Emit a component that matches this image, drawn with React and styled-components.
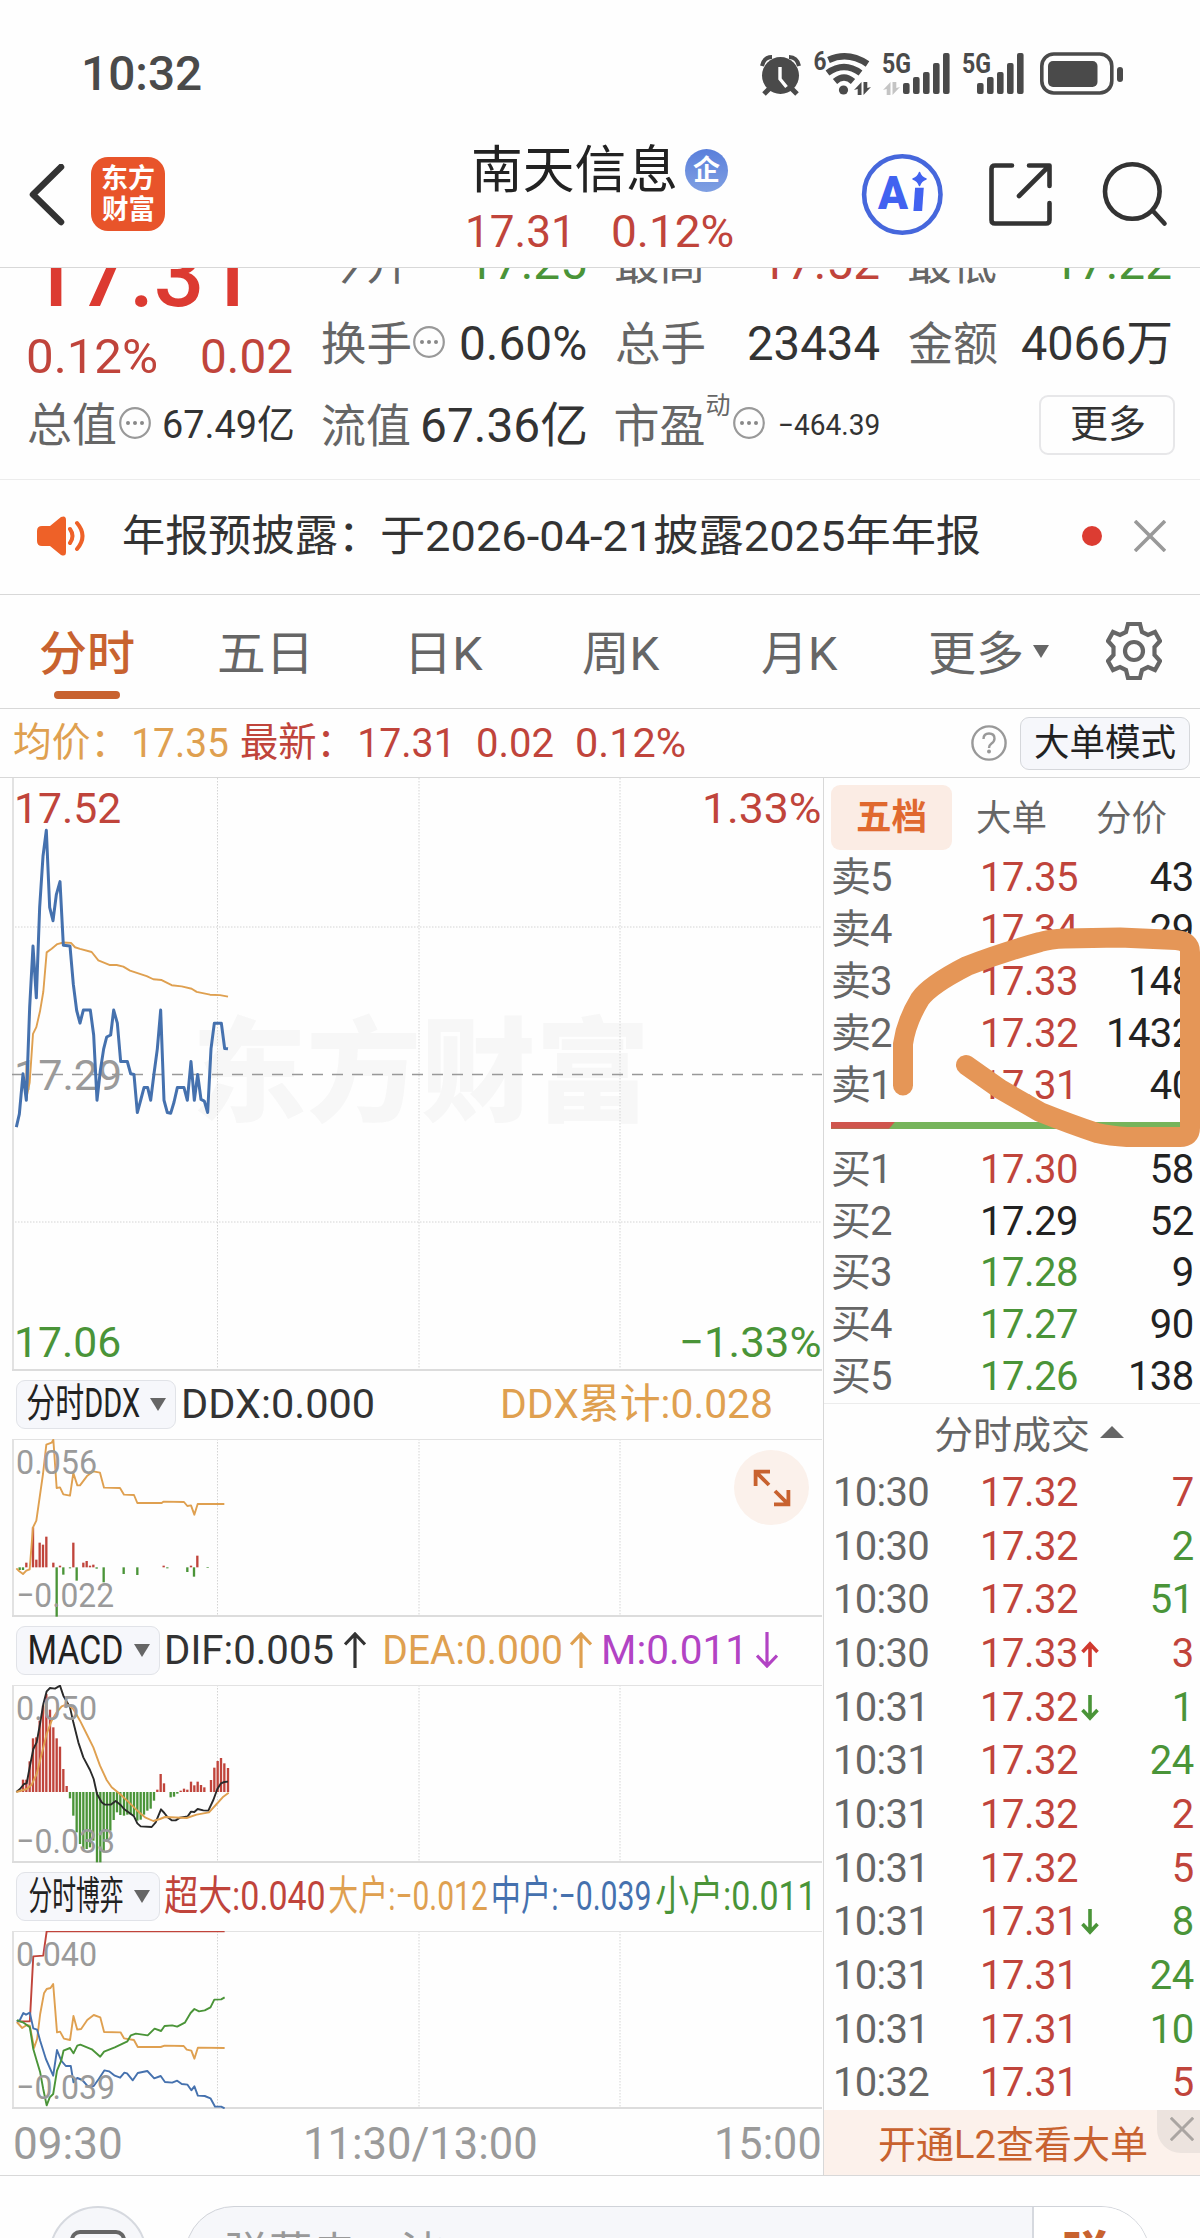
import React, { useLayoutEffect, useRef, useState } from "react";
import styled, { createGlobalStyle } from "styled-components";

const RED = "#c0443b";
const GREEN = "#4a9438";
const AMBER = "#dfa050";
const ORANGE = "#c8622f";
const BLUE = "#4571ae";
const GREY = "#666";
const DARK = "#333";
const MUTED = "#9a9a9a";
const LINE = "#d8d8d8";
const FONT = `Roboto, "Noto Sans CJK SC", sans-serif`;

const GlobalStyle = createGlobalStyle`
  * { box-sizing: border-box; }
  body { margin: 0; background: #fefefe; }
`;

/* ---------- text that is fitted to a given width ---------- */

const FitBox = styled.span`
  display: block;
  flex: none;
  width: ${(p) => p.$w}px;
  height: ${(p) => p.$size}px;
  margin-left: ${(p) => p.$ml || 0}px;
  margin-top: ${(p) => p.$mt || 0}px;
  font-size: ${(p) => p.$size}px;
  line-height: ${(p) => p.$size}px;
  font-weight: ${(p) => p.$weight || 400};
  color: ${(p) => p.$color || DARK};
`;

const FitText = styled.span`
  display: inline-block;
  white-space: pre;
  transform-origin: 0 50%;
`;

function Fit({ w, size, weight, color, ml, mt, children }) {
  const ref = useRef(null);
  const [transform, setTransform] = useState("none");
  useLayoutEffect(() => {
    const ctx = document.createElement("canvas").getContext("2d");
    const cs = getComputedStyle(ref.current);
    ctx.font = `${cs.fontWeight} ${cs.fontSize} ${cs.fontFamily}`;
    const m = ctx.measureText(ref.current.textContent);
    const s = w / (m.actualBoundingBoxLeft + m.actualBoundingBoxRight);
    setTransform(`translateX(${m.actualBoundingBoxLeft * s}px) scaleX(${s})`);
  }, [w, size, weight, children]);
  return (
    <FitBox $w={w} $size={size} $weight={weight} $color={color} $ml={ml} $mt={mt}>
      <FitText ref={ref} style={{ transform }}>{children}</FitText>
    </FitBox>
  );
}

/* ---------- page frame ---------- */

const Page = styled.div`
  position: relative;
  width: 1200px;
  height: 2238px;
  overflow: hidden;
  font-family: ${FONT};
  background: #fefefe;
`;

const StatusBar = styled.header`
  display: flex;
  justify-content: space-between;
  align-items: center;
  height: 148px;
  padding: 0 76px 0 84px;

  svg { overflow: visible; }
`;

const NavBar = styled.nav`
  display: flex;
  height: 120px;
  border-bottom: 1px solid ${LINE};
`;

const NavLeft = styled.div`
  display: flex;
  align-items: flex-start;
  width: 468px;
  padding: 9px 0 0 27px;
`;

const BackIcon = styled.svg`
  margin: 7px 24px 0 0;
`;

const AppLogo = styled.div`
  display: flex;
  flex-direction: column;
  align-items: center;
  gap: 4px;
  width: 74px;
  height: 74px;
  padding-top: 9px;
  border-radius: 17px;
  background: #e8542a;
`;

const TitleBlock = styled.div`
  width: 390px;
  margin-top: -3px;
`;

const TitleRow = styled.div`
  display: flex;
  align-items: center;
  height: 50px;
  padding-left: 6px;
`;

const Badge = styled.div`
  display: flex;
  align-items: center;
  justify-content: center;
  width: 43px;
  height: 43px;
  margin-left: 9px;
  padding-top: 2px;
  border-radius: 50%;
  background: linear-gradient(#5a7fdb, #7f9fe2);
`;

const SubtitleRow = styled.div`
  display: flex;
  align-items: center;
  height: 74px;
`;

const NavIcons = styled.svg`
  margin-top: 2px;
`;

/* ---------- quote summary ---------- */

const Quote = styled.section`
  display: flex;
  height: 212px;
  overflow: hidden;
  border-bottom: 1px solid #ececec;
`;

const PriceColumn = styled.div`
  width: 322px;
  margin-top: -37px;
`;

const PriceRow = styled.div`
  display: flex;
  align-items: center;
  height: ${(p) => p.$h}px;
  padding-left: ${(p) => p.$pl}px;
`;

const StatGrid = styled.div`
  display: grid;
  grid-template-columns: 263.5px 263.5px 262px;
  grid-auto-rows: 81.5px;
  column-gap: 30px;
  margin-top: -46px;
`;

const Stat = styled.div`
  display: flex;
  align-items: center;
  justify-content: space-between;
`;

const StatName = styled.div`
  display: flex;
  align-items: center;
`;

const DotsIcon = styled.svg`
  flex: none;
  margin: -5px 0 0 3px;
`;

const MoreCell = styled.div`
  display: flex;
  justify-content: flex-end;
  align-items: center;
  margin-right: -4px;
  margin-top: -2px;
`;

const MoreButton = styled.div`
  display: flex;
  align-items: center;
  justify-content: center;
  width: 136px;
  height: 60px;
  padding-bottom: 1px;
  border: 2px solid #e7e7e9;
  border-radius: 9px;
`;

/* ---------- notice and tabs ---------- */

const Notice = styled.section`
  display: flex;
  align-items: center;
  height: 115px;
  padding: 0 33px 2px 37px;
  border-bottom: 1px solid ${LINE};
`;

const RedDot = styled.i`
  width: 20px;
  height: 20px;
  margin-left: 102px;
  margin-right: 32px;
  border-radius: 50%;
  background: #dc3c32;
`;

const Tabs = styled.section`
  display: flex;
  height: 114px;
  padding-left: 40px;
  border-bottom: 1px solid ${LINE};
`;

const Tab = styled.div`
  display: flex;
  flex-direction: column;
  align-items: center;
  padding-top: 35px;
  margin-right: ${(p) => p.$gap}px;
`;

const TabUnderline = styled.i`
  width: 66px;
  height: 8px;
  margin-top: 14px;
  border-radius: 4px;
  background: ${ORANGE};
`;

const Caret = styled.i`
  flex: none;
  width: 0;
  height: 0;
  border: 8px solid transparent;
  border-top: 13px solid ${GREY};
  border-bottom: 0;
  margin-left: ${(p) => p.$ml || 0}px;
  margin-top: ${(p) => p.$mt || 0}px;
`;

const GearIcon = styled.svg`
  margin: 27px 0 0 57px;
`;

const InfoBar = styled.section`
  display: flex;
  align-items: center;
  height: 69px;
  padding: 0 10px 0 14px;
  border-bottom: 1px solid ${LINE};
`;

const HelpIcon = styled.svg`
  margin-left: auto;
`;

const ModeButton = styled.div`
  display: flex;
  align-items: center;
  justify-content: center;
  width: 170px;
  height: 53px;
  margin-left: 13px;
  padding-top: 1px;
  border: 1px solid #d5d7db;
  border-radius: 9px;
  background: #f6f7fb;
`;

/* ---------- main area ---------- */

const Main = styled.main`
  display: flex;
  height: 1398px;
  border-bottom: 1px solid ${LINE};
`;

const Charts = styled.div`
  width: 824px;
  padding-left: 12px;
  border-right: 1px solid ${LINE};
`;

const Plot = styled.div`
  position: relative;
  width: 810px;
  height: ${(p) => p.$h}px;
`;

const PlotLabels = styled.div`
  position: absolute;
  inset: 0;
  display: flex;
  flex-direction: column;
  justify-content: space-between;
  padding: ${(p) => p.$pad};
`;

const LabelPair = styled.div`
  display: flex;
  justify-content: space-between;
`;

const Watermark = styled.div`
  position: absolute;
  left: 185px;
  top: 239px;
`;

const PanelHead = styled.div`
  display: flex;
  align-items: center;
  height: 68px;
  padding: 0 0 2px 4px;
`;

const Chip = styled.div`
  display: flex;
  align-items: center;
  width: ${(p) => p.$w}px;
  height: 49px;
  margin-right: ${(p) => p.$gap}px;
  padding-left: ${(p) => p.$pl}px;
  border: 1px solid #e1e3e8;
  border-radius: 9px;
  background: #f6f7fb;
`;

const TrendIcon = styled.svg`
  flex: none;
  margin-left: ${(p) => p.$ml}px;
`;

const ExpandButton = styled.div`
  position: absolute;
  left: 722px;
  top: 11px;
  display: flex;
  align-items: center;
  justify-content: center;
  width: 75px;
  height: 75px;
  border-radius: 50%;
  background: #fbf1eb;
`;

const Axis = styled.div`
  display: flex;
  align-items: center;
  height: 70px;
  padding-left: 3px;
`;

/* ---------- order book ---------- */

const Book = styled.aside`
  display: flex;
  flex-direction: column;
  width: 376px;
`;

const BookTabs = styled.div`
  display: flex;
  align-items: center;
  height: 74.5px;
  padding: 5px 0 0 7px;
`;

const ActiveTab = styled.div`
  display: flex;
  align-items: center;
  justify-content: center;
  width: 121px;
  height: 65px;
  padding-top: 1px;
  border-radius: 9px;
  background: #fbece4;
`;

const Row = styled.div`
  display: flex;
  align-items: center;
  height: ${(p) => p.$h}px;
  padding: 0 7px 0 ${(p) => p.$pl}px;
  font-size: 40px;
  line-height: 40px;
`;

const Price = styled.span`
  width: ${(p) => p.$w}px;
  letter-spacing: -0.5px;
  color: ${(p) => p.$color};
`;

const Time = styled.span`
  width: 147px;
  letter-spacing: -0.7px;
  color: ${GREY};
`;

const Side = styled.span`
  width: 149px;
  letter-spacing: -1px;
  color: ${GREY};
`;

const Quantity = styled.span`
  flex: 1;
  margin-right: -0.6px;
  letter-spacing: -0.6px;
  text-align: right;
  color: ${(p) => p.$color};
`;

const RatioBar = styled.div`
  height: 7px;
  margin: 10px 7px 15px;
  background: #76b45b;
`;

const SellShare = styled.div`
  width: 64px;
  height: 7px;
  background: #cf554d;
  clip-path: polygon(0 0, 100% 0, 58px 100%, 0 100%);
`;

const TradesTitle = styled.div`
  display: flex;
  align-items: center;
  height: 62px;
  padding-left: 111px;
  border-top: 1px solid #ececec;
`;

const UpCaret = styled.i`
  width: 0;
  height: 0;
  margin: -6px 0 0 11px;
  border: 12px solid transparent;
  border-top: 0;
  border-bottom: 12px solid ${GREY};
`;

const TradeList = styled.div`
  padding-top: 1px;
`;

const Banner = styled.div`
  display: flex;
  justify-content: space-between;
  height: 65px;
  margin-top: auto;
  padding-left: 55px;
  background: #fcf1eb;
`;

const BannerClose = styled.div`
  display: flex;
  align-items: center;
  justify-content: center;
  width: 43px;
  height: 43px;
  padding: 0 0 6px 6px;
  border-bottom-left-radius: 24px;
  background: #ece3de;
`;

/* ---------- comment bar ---------- */

const BottomBar = styled.footer`
  display: flex;
  padding: 30px 0 0 49px;
`;

const RoundButton = styled.div`
  display: flex;
  justify-content: center;
  width: 98px;
  height: 98px;
  padding-top: 22px;
  border: 2px solid #d6d9df;
  border-radius: 50%;
  background: #f6f7fa;
`;

const CommentBox = styled.div`
  display: flex;
  width: 965px;
  height: 98px;
  margin-left: 38px;
  overflow: hidden;
  border: 1px solid #d0d3d9;
  border-radius: 49px;
  background: #f6f7fa;
`;

const CommentInput = styled.div`
  display: flex;
  align-items: center;
  width: 846px;
  padding: 0 0 2px 41px;
`;

const DanmuToggle = styled.div`
  display: flex;
  flex: 1;
  align-items: center;
  padding: 0 0 3px 30px;
  border-left: 2px solid #d6d9df;
  background: #fff;
`;

const Scribble = styled.svg`
  position: absolute;
  left: 880px;
  top: 910px;
`;

/* ---------- icons ---------- */

const UpDown = ({ x, color }) => (
  <g fill={color}>
    <path d={`M${x} 37 l7.5 -8 v13 h-3.800 v-6z`} />
    <path d={`M${x + 17} 34 l-7.500 8 v-13 h3.800 v6z`} />
  </g>
);

const Bars = ({ x }) =>
  [[0, 30], [10, 24], [20, 19], [30, 10], [40, 0]].map(([dx, y]) => (
    <rect key={dx} x={x + dx} y={y} width="6.6" height={41 - y} rx="2" />
  ));

const StatusIcons = () => (
  <svg width="364" height="46" viewBox="0 -2 364 46" fill="#4a4a4a">
    <circle cx="20.500" cy="22.500" r="18.500" />
    <path d="M20 14 v12 l6.5 8" fill="none" stroke="#fff" strokeWidth="3.4" />
    <path d="M2 13 Q4 4 12 4 M39 13 Q37 4 29 4" fill="none" stroke="#4a4a4a" strokeWidth="4" />
    <path d="M10 35 l-6 6 M31 35 l6 6" stroke="#4a4a4a" strokeWidth="5" />
    <text x="53.5" y="16.5" fontSize="25" fontWeight="700" textLength="13" lengthAdjust="spacingAndGlyphs">6</text>
    <g fill="none" stroke="#4a4a4a" strokeWidth="6.400">
      <path d="M68.500 7 Q88 -2 107.500 11" />
      <path d="M67.500 20 Q84 8 100.500 20" />
      <path d="M75 28.500 Q84 20.500 93 28.500" />
    </g>
    <circle cx="83.500" cy="37" r="4.600" />
    <UpDown x={94} color="#4a4a4a" />
    <text x="122" y="20" fontSize="28" fontWeight="700" textLength="29" lengthAdjust="spacingAndGlyphs">5G</text>
    <UpDown x={123} color="#c4c4c4" />
    <Bars x={143} />
    <text x="202" y="20" fontSize="28" fontWeight="700" textLength="29" lengthAdjust="spacingAndGlyphs">5G</text>
    <Bars x={217} />
    <rect x="281.800" y="1" width="70" height="39" rx="12" fill="none" stroke="#4a4a4a" strokeWidth="3.600" />
    <rect x="288" y="8" width="49.500" height="26" rx="5" />
    <rect x="357" y="14" width="6" height="15" rx="3" />
  </svg>
);

const Dots = () => (
  <DotsIcon width="32" height="32" viewBox="0 0 32 32">
    <circle cx="16" cy="16" r="14.800" fill="none" stroke="#999" strokeWidth="2.200" />
    {[9, 16, 23].map((x) => <circle key={x} cx={x} cy="16" r="2" fill="#888" />)}
  </DotsIcon>
);

const Cross = ({ size, color, width }) => (
  <svg width={size} height={size} viewBox="0 0 32 32">
    <path d="M1 1 L31 31 M31 1 L1 31" stroke={color} strokeWidth={width} />
  </svg>
);

const Trend = ({ down, color, ml }) => (
  <TrendIcon $ml={ml} width="22" height="36" viewBox="-1 0 22 36">
    <path
      d="M10 36 V2 M0 12.500 L10 2 L20 12.500"
      transform={down ? "rotate(180 10 18)" : undefined}
      fill="none" stroke={color} strokeWidth="3.200"
    />
  </TrendIcon>
);

const Tick = ({ down, color }) => (
  <svg width="18" height="26" viewBox="0 0 18 26">
    <path
      d="M9 26 V3 M1.500 11 L9 3 L16.500 11"
      transform={down ? "rotate(180 9 13)" : undefined}
      fill="none" stroke={color} strokeWidth="3.600"
    />
  </svg>
);

/* ---------- charts ---------- */

const Grid = ({ h, rows = [], top }) => (
  <g stroke="#d4d4d4" strokeWidth="1">
    {[205.5, 407, 608].map((x) => (
      <line key={x} x1={x} x2={x} y1="0" y2={h} strokeDasharray="1.500 1.500" />
    ))}
    {rows.map((y) => <line key={y} x1="0" x2="810" y1={y} y2={y} strokeDasharray="1.500 1.500" />)}
    {top && <line x1="0" x2="810" y1="0.500" y2="0.500" stroke="#e2e2e2" />}
    <line x1="1" x2="1" y1="0" y2={h} stroke="#e2e2e2" strokeWidth="2" />
    <line x1="0" x2="810" y1={h - 1} y2={h - 1} stroke="#dcdcdc" strokeWidth="2" />
  </g>
);

const Curve = ({ points, color, width = 1.9 }) => (
  <polyline
    points={points} fill="none" stroke={color} strokeWidth={width}
    strokeLinejoin="round" vectorEffect="non-scaling-stroke"
  />
);

const Histogram = ({ base, data }) =>
  data.map(([x, y]) => (
    <rect
      key={x} x={x - 3.5} width="7" y={Math.min(base, y)} height={Math.abs(y - base)}
      fill={y < base ? RED : GREEN}
    />
  ));

const PRICE = "49,903 58,870 69,768 79,835 89,600 99,445 109,576 119,347 129,218 139,152 149,347 159,381 169,315 180,282 190,443 210,445 220,542 230,608 240,640 250,607 271,607 281,670 291,835 301,760 311,705 320,675 332,670 341,607 352,640 362,737 382,737 392,768 402,770 412,866 422,835 432,803 443,803 452,835 462,768 472,705 482,607 492,835 502,866 512,868 522,840 532,803 552,803 562,835 573,737 583,835 593,770 603,833 613,837 623,866 633,705 643,640 664,640 674,704 684,705";
const AVERAGE = "79,830 89,790 99,667 109,650 120,610 130,560 140,461 155,452 172,440 190,436 213,437 225,448 240,452 275,460 295,481 330,493 350,493 370,497 390,507 440,521 460,529 485,531 515,544 545,547 575,553 590,561 630,568 660,569 684,573";
const DDX_SUM = "49,623 58,632 69,640 79,630 89,626 99,500 109,480 129,340 139,252 149,248 155,246 160,237 170,382 180,380 190,401 210,405 220,337 232,374 240,374 262,345 280,332 300,336 312,381 360,382 372,402 402,403 412,427 485,427 490,423 552,424 562,436 573,434 583,462 593,430 673,430";
const DDX_BARS = [[59, 628], [69, 628], [79, 606], [99, 500], [109, 597], [119, 546], [129, 552], [139, 528], [160, 606], [170, 768], [180, 615], [190, 642], [210, 623], [220, 546], [230, 660], [250, 606], [260, 601], [270, 615], [280, 612], [290, 624], [311, 665], [371, 640], [412, 643], [491, 615], [502, 623], [562, 634], [573, 615], [582, 648], [592, 585], [623, 622]];
const MACD_BARS = [[59, 1288], [69, 1257], [79, 1257], [89, 1202], [99, 1133], [109, 1130], [119, 1080], [129, 1035], [139, 1000], [150, 1047], [160, 1100], [170, 1133], [180, 1158], [190, 1225], [200, 1276], [210, 1313], [220, 1365], [230, 1415], [240, 1450], [250, 1465], [260, 1465], [270, 1460], [280, 1440], [291, 1505], [301, 1505], [311, 1475], [321, 1440], [331, 1410], [341, 1378], [351, 1355], [361, 1363], [372, 1365], [382, 1362], [392, 1362], [402, 1365], [412, 1380], [422, 1377], [432, 1362], [442, 1350], [452, 1344], [462, 1320], [472, 1287], [482, 1240], [492, 1268], [512, 1310], [522, 1308], [532, 1299], [542, 1290], [552, 1284], [562, 1287], [573, 1263], [583, 1274], [593, 1263], [603, 1273], [613, 1280], [633, 1258], [643, 1221], [653, 1201], [663, 1192], [673, 1208], [684, 1222]];
const DIF = "49,1294 60,1285 72,1270 80,1268 90,1215 100,1165 110,1145 120,1090 130,1030 140,992 150,982 165,984 180,975 190,1005 210,1040 220,1085 235,1145 250,1190 270,1228 281,1255 291,1300 305,1325 315,1332 332,1332 347,1321 362,1333 372,1345 402,1367 412,1388 422,1397 455,1399 467,1385 483,1346 493,1357 503,1370 515,1379 527,1379 540,1371 563,1367 573,1353 583,1354 593,1345 610,1349 625,1350 640,1318 652,1285 663,1268 673,1264 684,1263";
const DEA = "49,1294 80,1285 95,1272 110,1240 125,1180 140,1120 155,1080 170,1055 185,1037 200,1031 220,1045 240,1080 260,1120 280,1160 300,1215 320,1258 335,1280 360,1300 390,1328 412,1350 435,1370 460,1381 480,1375 495,1369 560,1372 590,1362 627,1355 650,1330 670,1308 686,1296";
const GAME = [
  [RED, "44,572 78,572 87,377 113,375 122,302 587,302"],
  [AMBER, "44,574 58,592 70,583 78,585 89,652 97,625 105,550 115,488 122,475 132,472 139,460 149,605 157,603 167,624 183,628 192,556 202,597 212,595 228,568 245,553 262,560 272,604 315,605 324,623 350,628 360,649 420,649 430,645 480,646 488,657 500,660 508,684 517,651 587,652"],
  [BLUE, "44,572 52,568 61,547 68,552 78,546 87,593 97,597 105,630 120,685 139,735 149,658 160,690 172,706 185,706 192,755 202,742 215,748 228,765 245,766 258,745 273,719 285,722 300,735 314,741 325,726 332,728 347,749 360,727 385,721 403,743 420,736 431,754 450,756 463,750 475,760 490,762 500,779 508,767 517,795 535,796 550,803 562,828 578,828 587,833"],
  [GREEN, "44,568 52,572 60,575 78,590 87,655 96,690 105,725 113,775 122,824 130,800 139,790 149,720 160,690 166,660 183,652 192,668 202,645 210,642 240,656 262,678 272,663 300,650 333,632 342,614 355,609 386,614 404,594 421,601 430,586 450,584 463,588 483,576 498,547 508,535 520,542 535,539 550,530 560,507 578,506 587,500"],
];

function SubPlot({ viewBox, high, low, children, extra }) {
  return (
    <Plot $h={178}>
      <svg width="810" height="178">
        <Grid h={178} top />
        <svg width="810" height="178" viewBox={viewBox} preserveAspectRatio="none">{children}</svg>
      </svg>
      <PlotLabels $pad="6px 0 5px 5px">
        <Fit w={79} size={34} color={MUTED}>{high}</Fit>
        <Fit w={95} size={34} color={MUTED} ml={1}>{low}</Fit>
      </PlotLabels>
      {extra}
    </Plot>
  );
}

/* ---------- data ---------- */

const SELLS = [["卖5", "17.35", 43], ["卖4", "17.34", 29], ["卖3", "17.33", 148], ["卖2", "17.32", 1432], ["卖1", "17.31", 40]];
const BUYS = [["买1", "17.30", 58, RED], ["买2", "17.29", 52, "#222"], ["买3", "17.28", 9, GREEN], ["买4", "17.27", 90, GREEN], ["买5", "17.26", 138, GREEN]];
const TRADES = [
  ["10:30", "17.32", 7, RED], ["10:30", "17.32", 2, GREEN], ["10:30", "17.32", 51, GREEN],
  ["10:30", "17.33", 3, RED, "up"], ["10:31", "17.32", 1, GREEN, "down"], ["10:31", "17.32", 24, GREEN],
  ["10:31", "17.32", 2, RED], ["10:31", "17.32", 5, RED], ["10:31", "17.31", 8, GREEN, "down"],
  ["10:31", "17.31", 24, GREEN], ["10:31", "17.31", 10, GREEN], ["10:32", "17.31", 5, RED],
];

const BookRow = ({ side, price, qty, color = RED }) => (
  <Row $h={52.05} $pl={7}>
    <Side>{side}</Side>
    <Price $w={100} $color={color}>{price}</Price>
    <Quantity $color="#222">{qty}</Quantity>
  </Row>
);

export default function App() {
  return (
    <Page>
      <GlobalStyle />
      <StatusBar>
        <Fit w={117} size={48} weight={500} color="#4a4a4a">10:32</Fit>
        <StatusIcons />
      </StatusBar>

      <NavBar>
        <NavLeft>
          <BackIcon width="40" height="62" viewBox="0 0 40 62" fill="none" stroke="#333" strokeWidth="6.500">
            <path d="M34 3 L6 30.500 L34 58" strokeLinecap="round" strokeLinejoin="round" />
          </BackIcon>
          <AppLogo>
            <Fit w={52} size={27} weight={700} color="#fff">东方</Fit>
            <Fit w={52} size={27} weight={700} color="#fff">财富</Fit>
          </AppLogo>
        </NavLeft>
        <TitleBlock>
          <TitleRow>
            <Fit w={202} size={51} color="#222">南天信息</Fit>
            <Badge><Fit w={27} size={28} weight={700} color="#fff">企</Fit></Badge>
          </TitleRow>
          <SubtitleRow>
            <Fit w={99} size={44} color={RED}>17.31</Fit>
            <Fit w={120} size={44} color={RED} ml={46}>0.12%</Fit>
          </SubtitleRow>
        </TitleBlock>
        <NavIcons width="320" height="90" viewBox="858 150 320 90" fill="none" stroke="#333" strokeWidth="4.600" strokeLinecap="round" strokeLinejoin="round">
          <circle cx="902.300" cy="194.500" r="38.200" stroke="#4667dc" />
          <g fill="#4162f0" stroke="none">
            <text x="878" y="209" fontSize="47" fontWeight="900" textLength="30" lengthAdjust="spacingAndGlyphs">A</text>
            <text x="911" y="211" fontSize="44" fontWeight="900" textLength="15" lengthAdjust="spacingAndGlyphs" transform="translate(38 0) skewX(-4) translate(-24 0)">ı</text>
            <path d="M919.500 172.500 Q921 177.500 926 179 Q921 180.500 919.500 185.500 Q918 180.500 913 179 Q918 177.500 919.500 172.500z" stroke="#4162f0" strokeWidth="1.500" />
          </g>
          <path d="M1012 165.500 H995 Q991.500 165.500 991.500 169 V220 Q991.500 223.500 995 223.500 H1046 Q1049.500 223.500 1049.500 220 V203 M1029 165.500 H1049.500 V186 M1049 166 L1019 196" />
          <circle cx="1132.300" cy="191.500" r="27.300" />
          <path d="M1153 211 L1164.500 223.500" />
        </NavIcons>
      </NavBar>

      <Quote>
        <PriceColumn>
          <PriceRow $h={90} $pl={35}><Fit w={203} size={90} weight={500} color="#dc3a31">17.31</Fit></PriceRow>
          <PriceRow $h={71} $pl={28}>
            <Fit w={129} size={48} color={RED}>0.12%</Fit>
            <Fit w={90} size={48} color={RED} ml={45}>0.02</Fit>
          </PriceRow>
          <PriceRow $h={66} $pl={28}>
            <Fit w={88} size={46} color={GREY}>总值</Fit>
            <Dots />
            <Fit w={129} size={39} ml={13}>67.49亿</Fit>
          </PriceRow>
        </PriceColumn>
        <StatGrid>
          <Stat><Fit w={87} size={46} color={GREY}>今开</Fit><Fit w={115} size={48} color={GREEN}>17.25</Fit></Stat>
          <Stat><Fit w={87} size={46} color={GREY}>最高</Fit><Fit w={115} size={48} color={RED}>17.52</Fit></Stat>
          <Stat><Fit w={87} size={46} color={GREY}>最低</Fit><Fit w={115} size={48} color={GREEN}>17.22</Fit></Stat>
          <Stat>
            <StatName><Fit w={88} size={46} color={GREY}>换手</Fit><Dots /></StatName>
            <Fit w={125} size={48}>0.60%</Fit>
          </Stat>
          <Stat><Fit w={88} size={46} color={GREY}>总手</Fit><Fit w={130} size={48}>23434</Fit></Stat>
          <Stat><Fit w={88} size={46} color={GREY}>金额</Fit><Fit w={149} size={48}>4066万</Fit></Stat>
          <Stat><Fit w={88} size={46} color={GREY}>流值</Fit><Fit w={163} size={48}>67.36亿</Fit></Stat>
          <Stat>
            <StatName>
              <Fit w={88} size={46} color={GREY}>市盈</Fit>
              <Fit w={23} size={25} color={GREY} ml={3} mt={-40}>动</Fit>
              <Dots />
            </StatName>
            <Fit w={99} size={29}>−464.39</Fit>
          </Stat>
          <MoreCell><MoreButton><Fit w={73} size={38}>更多</Fit></MoreButton></MoreCell>
        </StatGrid>
      </Quote>

      <Notice>
        <svg width="50" height="42" viewBox="0 0 50 42" fill="#ee6128">
          <path d="M5 11 H13 L24 2 Q29 0 29 5 V37 Q29 42 24 40 L13 31 H5 Q0 31 0 26 V16 Q0 11 5 11z" />
          <path d="M33 14 Q38 21 33 28 M40 8 Q51 21 40 34" fill="none" stroke="#ee6128" strokeWidth="4" strokeLinecap="round" />
        </svg>
        <Fit w={229} size={43} ml={37}>年报预披露：</Fit>
        <Fit w={598} size={43} ml={29}>于2026-04-21披露2025年年报</Fit>
        <RedDot />
        <Cross size={32} color="#999" width={3.6} />
      </Notice>

      <Tabs>
        <Tab $gap={85}><Fit w={94} size={47} color={ORANGE} weight={500}>分时</Fit><TabUnderline /></Tab>
        <Tab $gap={105}><Fit w={88} size={47} color={GREY}>五日</Fit></Tab>
        <Tab $gap={100}><Fit w={71} size={47} color={GREY}>日K</Fit></Tab>
        <Tab $gap={102}><Fit w={77} size={47} color={GREY}>周K</Fit></Tab>
        <Tab $gap={92}><Fit w={76} size={47} color={GREY}>月K</Fit></Tab>
        <Tab $gap={0}><Fit w={92} size={47} color={GREY}>更多</Fit></Tab>
        <Caret $ml={11} $mt={50} />
        <GearIcon width="56" height="58" viewBox="-28 -29 56 58" fill="none" stroke={GREY} strokeWidth="4.200">
          <path d="M-6 -27 H6 L8 -19 L14 -16 L21 -19 L26 -10 L20.500 -4 V4 L26 10 L21 19 L14 16 L8 19 L6 27 H-6 L-8 19 L-14 16 L-21 19 L-26 10 L-20.500 4 V-4 L-26 -10 L-21 -19 L-14 -16 L-8 -19z" />
          <circle r="9" />
        </GearIcon>
      </Tabs>

      <InfoBar>
        <Fit w={90} size={40} color={AMBER}>均价：</Fit>
        <Fit w={94} size={41} color={AMBER} ml={30}>17.35</Fit>
        <Fit w={89} size={40} color={RED} ml={13}>最新：</Fit>
        <Fit w={88} size={41} color={RED} ml={30}>17.31</Fit>
        <Fit w={75} size={41} color={RED} ml={30}>0.02</Fit>
        <Fit w={108} size={41} color={RED} ml={24}>0.12%</Fit>
        <HelpIcon width="36" height="36" viewBox="0 0 36 36">
          <circle cx="18" cy="18" r="16.600" fill="none" stroke="#999" strokeWidth="2.400" />
          <path d="M12.500 14 Q12.500 8.500 18 8.500 Q23.500 8.500 23.500 13.500 Q23.500 16.500 20.500 18.500 Q18 20.300 18 23" fill="none" stroke="#999" strokeWidth="2.400" />
          <circle cx="18" cy="26.500" r="2" fill="#999" />
        </HelpIcon>
        <ModeButton><Fit w={140} size={37} color="#222">大单模式</Fit></ModeButton>
      </InfoBar>

      <Main>
        <Charts>
          <Plot $h={593}>
            <Watermark><Fit w={446} size={113} weight={900} color="#f7f7f7">东方财富</Fit></Watermark>
            <PlotLabels $pad="9px 2px 7px 5px">
              <LabelPair><Fit w={103} size={43} color={RED}>17.52</Fit><Fit w={115} size={43} color={RED}>1.33%</Fit></LabelPair>
              <Fit w={103} size={43} color={MUTED}>17.29</Fit>
              <LabelPair><Fit w={103} size={43} color={GREEN}>17.06</Fit><Fit w={138} size={43} color={GREEN}>−1.33%</Fit></LabelPair>
            </PlotLabels>
            <svg width="810" height="593" style={{ position: "relative" }}>
              <Grid h={593} rows={[149, 444]} />
              <line x1="0" x2="810" y1="296.500" y2="296.500" stroke="#999" strokeWidth="1.600" strokeDasharray="11 9" />
              <svg width="810" height="593" viewBox="36 20 2430 1499.700" preserveAspectRatio="none">
                <Curve points={AVERAGE} color={AMBER} />
                <Curve points={PRICE} color={BLUE} width={3} />
              </svg>
            </svg>
          </Plot>

          <PanelHead>
            <Chip $w={160} $gap={8} $pl={10}>
              <Fit w={113} size={40} color="#222">分时DDX</Fit><Caret $ml={10} />
            </Chip>
            <Fit w={189} size={41}>DDX:0.000</Fit>
            <Fit w={268} size={41} color={AMBER} ml={130}>DDX累计:0.028</Fit>
          </PanelHead>
          <SubPlot
            viewBox="36 235 2430 534" high="0.056" low="−0.022"
            extra={
              <ExpandButton>
                <svg width="38" height="38" viewBox="0 0 38 38" fill="none" stroke={ORANGE} strokeWidth="3.800">
                  <path d="M17 2.600 H2.600 V17 M2.600 2.600 L16 16 M21 35.400 H35.400 V21 M35.400 35.400 L22 22" />
                </svg>
              </ExpandButton>
            }
          >
            <Histogram base={620} data={DDX_BARS} />
            <Curve points={DDX_SUM} color={AMBER} />
          </SubPlot>

          <PanelHead>
            <Chip $w={144} $gap={7} $pl={13}>
              <Fit w={92} size={41} color="#222">MACD</Fit><Caret $ml={12} />
            </Chip>
            <Fit w={166} size={41}>DIF:0.005</Fit><Trend color={DARK} ml={11} />
            <Fit w={176} size={41} color={AMBER} ml={19}>DEA:0.000</Fit><Trend color={AMBER} ml={9} />
            <Fit w={136} size={41} color="#b243c4" ml={12}>M:0.011</Fit><Trend color="#b243c4" ml={16} down />
          </PanelHead>
          <SubPlot viewBox="36 973 2430 534" high="0.050" low="−0.033">
            <Histogram base={1294} data={MACD_BARS} />
            <Curve points={DIF} color="#2a2a2a" />
            <Curve points={DEA} color={AMBER} />
          </SubPlot>

          <PanelHead>
            <Chip $w={144} $gap={5} $pl={12}>
              <Fit w={94} size={39} color="#222">分时博弈</Fit><Caret $ml={11} />
            </Chip>
            <Fit w={159} size={41} color={RED}>超大:0.040</Fit>
            <Fit w={158} size={41} color={AMBER} ml={5}>大户:−0.012</Fit>
            <Fit w={157} size={41} color={BLUE} ml={6}>中户:−0.039</Fit>
            <Fit w={154} size={41} color={GREEN} ml={6}>小户:0.011</Fit>
          </PanelHead>
          <SubPlot viewBox="31.400 301 2116.500 534" high="0.040" low="−0.039">
            {GAME.map(([color, points]) => <Curve key={color} color={color} points={points} />)}
          </SubPlot>

          <Axis>
            <Fit w={106} size={44} color={MUTED}>09:30</Fit>
            <Fit w={230} size={44} color={MUTED} ml={185}>11:30/13:00</Fit>
            <Fit w={103} size={44} color={MUTED} ml={181}>15:00</Fit>
          </Axis>
        </Charts>

        <Book>
          <BookTabs>
            <ActiveTab><Fit w={69} size={36} weight={700} color="#e0692f">五档</Fit></ActiveTab>
            <Fit w={69} size={36} color={GREY} ml={25} mt={3}>大单</Fit>
            <Fit w={69} size={36} color={GREY} ml={51} mt={3}>分价</Fit>
          </BookTabs>
          {SELLS.map(([side, price, qty]) => <BookRow key={side} side={side} price={price} qty={qty} />)}
          <RatioBar><SellShare /></RatioBar>
          {BUYS.map(([side, price, qty, color]) => <BookRow key={side} side={side} price={price} qty={qty} color={color} />)}
          <TradesTitle><Fit w={154} size={38} color={GREY}>分时成交</Fit><UpCaret /></TradesTitle>
          <TradeList>
            {TRADES.map(([time, price, qty, color, dir], i) => (
              <Row key={i} $h={53.7} $pl={9}>
                <Time>{time}</Time>
                <Price $w={101} $color={RED}>{price}</Price>
                {dir && <Tick down={dir === "down"} color={dir === "down" ? GREEN : "#d0392f"} />}
                <Quantity $color={color}>{qty}</Quantity>
              </Row>
            ))}
          </TradeList>
          <Banner>
            <Fit w={268} size={38} color={ORANGE} mt={16}>开通L2查看大单</Fit>
            <BannerClose><Cross size={24} color="#aaa5a2" width={4} /></BannerClose>
          </Banner>
        </Book>
      </Main>

      <BottomBar>
        <RoundButton>
          <svg width="56" height="50" viewBox="0 0 56 50" fill="none" stroke="#666" strokeWidth="4">
            <rect x="2" y="2" width="52" height="46" rx="8" />
          </svg>
        </RoundButton>
        <CommentBox>
          <CommentInput><Fit w={216} size={44} color="#999">弹幕走一波</Fit></CommentInput>
          <DanmuToggle><Fit w={45} size={47} weight={900} color={ORANGE}>弹</Fit></DanmuToggle>
        </CommentBox>
      </BottomBar>

      <Scribble width="320" height="250" viewBox="880 910 320 250">
        <path
          d="M903 1085.500 V1044 Q906 1022 920 999 Q930 985 967 966 Q1000 953 1040 942 Q1050 939 1065 938.500 L1120 937.500 L1176 940 Q1190 941 1190 952 V1128 Q1190 1137 1180 1137 H1127 Q1110 1136 1097 1133 Q1070 1124 1040 1112 L1000 1089 L966 1065"
          fill="none" stroke="#e59657" strokeWidth="20" strokeLinecap="round" strokeLinejoin="round"
        />
      </Scribble>
    </Page>
  );
}
